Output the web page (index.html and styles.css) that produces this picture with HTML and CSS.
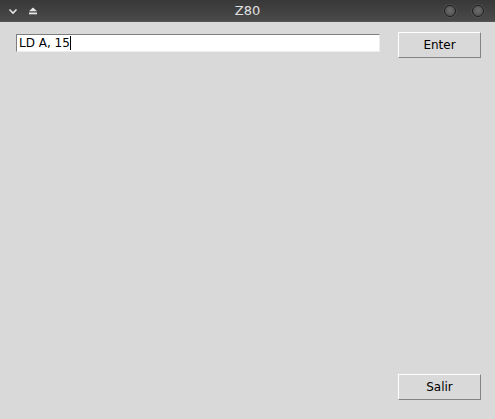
FILE: index.html
```html
<!DOCTYPE html>
<html lang="es">
<head>
<meta charset="utf-8">
<title>Z80</title>
<link rel="stylesheet" href="styles.css">
</head>
<body>
<div class="window">
  <header class="titlebar">
    <div class="tb-left">
      <svg class="tb-icon" width="10" height="8" viewBox="0 0 10 8"><path d="M1.5 2.5 L5 6 L8.5 2.5" fill="none" stroke="#e6e6e6" stroke-width="1.6"/></svg>
      <svg class="tb-icon" width="10" height="8" viewBox="0 0 10 8"><path d="M5 0.5 L9 4.2 L1 4.2 Z" fill="#e6e6e6"/><rect x="1" y="5.5" width="8" height="1.8" fill="#e6e6e6"/></svg>
    </div>
    <div class="tb-title">Z80</div>
    <div class="tb-right">
      <span class="tb-circle"></span>
      <span class="tb-circle"></span>
    </div>
  </header>
  <main class="content">
    <div class="entry-col">
      <div class="entry"><span class="entry-text">LD A, 15</span><span class="caret"></span></div>
    </div>
    <div class="btn-col">
      <button class="btn">Enter</button>
      <button class="btn">Salir</button>
    </div>
  </main>
</div>
</body>
</html>
```

FILE: styles.css
```css
html, body {
  margin: 0;
  padding: 0;
  height: 100%;
}
body {
  background: #d9d9d9;
  font-family: "DejaVu Sans", sans-serif;
  font-size: 12px;
  color: #000;
  overflow: hidden;
}
.window {
  display: flex;
  flex-direction: column;
  height: 100vh;
}
.titlebar {
  height: 22px;
  flex: 0 0 22px;
  display: flex;
  align-items: center;
  justify-content: space-between;
  background: linear-gradient(#383838, #4a4a4a);
  border-bottom: 1px solid #555555;
  box-sizing: border-box;
  position: relative;
}
.tb-left {
  display: flex;
  align-items: center;
  gap: 10px;
  padding-left: 8px;
}
.tb-icon {
  display: block;
}
.tb-title {
  position: absolute;
  left: 0;
  right: 0;
  top: 0;
  text-align: center;
  line-height: 22px;
  font-size: 13px;
  color: #e0e0e0;
  pointer-events: none;
}
.tb-right {
  display: flex;
  align-items: center;
  gap: 16px;
  padding-right: 11px;
}
.tb-circle {
  width: 12px;
  height: 12px;
  border-radius: 50%;
  box-sizing: border-box;
  border: 1px solid #222222;
  background: radial-gradient(circle at 50% 45%, #6e6e6e, #555555 65%, #3c3c3c);
  box-shadow: 0 0 0 1px rgba(255,255,255,0.07);
}
.content {
  flex: 1;
  display: flex;
  padding: 10px 14px 19px 16px;
  gap: 18px;
}
.entry-col {
  flex: 1;
  padding-top: 2px;
}
.entry {
  height: 18px;
  box-sizing: border-box;
  background: #fff;
  border-top: 1px solid #7d7d7d;
  border-left: 1px solid #7d7d7d;
  border-right: 1px solid #ececec;
  border-bottom: 1px solid #ececec;
  display: flex;
  align-items: center;
  padding-left: 2px;
  line-height: 14px;
  white-space: pre;
}
.caret {
  display: inline-block;
  width: 1px;
  height: 14px;
  background: #000;
  margin-left: 0;
}
.btn-col {
  width: 83px;
  display: flex;
  flex-direction: column;
  justify-content: space-between;
}
.btn {
  width: 83px;
  height: 26px;
  box-sizing: border-box;
  background: #d9d9d9;
  border-top: 1px solid #ffffff;
  border-left: 1px solid #ffffff;
  border-right: 1px solid #848484;
  border-bottom: 1px solid #848484;
  font-family: "DejaVu Sans", sans-serif;
  font-size: 12px;
  color: #000;
  padding: 0;
  margin: 0;
  border-radius: 0;
}
```
